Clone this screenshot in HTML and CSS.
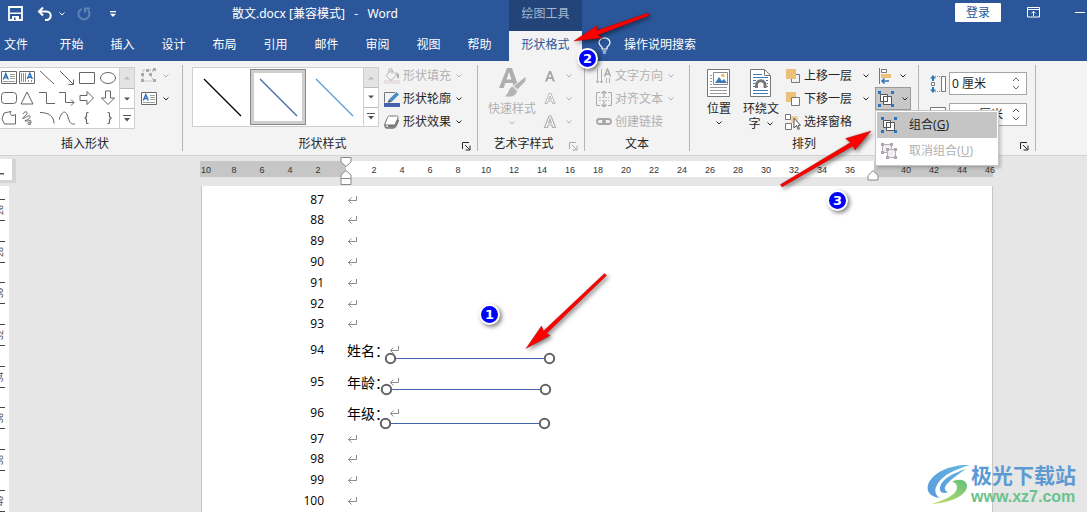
FILE: index.html
```html
<!DOCTYPE html>
<html lang="zh-CN">
<head>
<meta charset="utf-8">
<title>散文.docx - Word</title>
<link rel="stylesheet" href="styles.css">
</head>
<body>
<svg class="defs" aria-hidden="true">
  <symbol id="chev" viewBox="0 0 8 8"><path d="M1.500 2.500 4 5l2.500-2.500" fill="none" stroke="currentColor"/></symbol>
  <symbol id="ret" viewBox="0 0 10 10"><path d="M9.500 1v4.500H1.500M4.500 2.500l-3 3 3 3" fill="none" stroke="#8c8c8c"/></symbol>
  <symbol id="launch" viewBox="0 0 9 9"><path d="M.5 7V.5H7M3 3l4.500 4.500M8 3.500V8H3.500" fill="none" stroke="currentColor"/></symbol>
  <symbol id="textbox" viewBox="0 0 16 14"><path d="M.5.5h15v12H.5z" fill="#fff" stroke="#6a6a6a"/><path d="M9 3.500h5M9 5.500h5M9 7.500h5M2 10.500h12" stroke="#a0a0a0"/><path d="M2.300 8.500 4.800 2.500l2.500 6M3.200 6.500h3.200" fill="none" stroke="#2f6fb5" stroke-width="1.400"/></symbol>
  <symbol id="group" viewBox="0 0 16 16"><path d="M2.500 3.500h7v7h-7zM5.500 5.500h8v8h-8z" fill="#fff" stroke="#555"/><path d="M5.500 10.500v-5h4v5z" fill="#fff" stroke="#555"/><path d="M0 0h3v3H0zM13 0h3v3h-3zM0 13h3v3H0zM13 13h3v3h-3z" fill="#2e75b6"/></symbol>
  <symbol id="ungroup" viewBox="0 0 16 16"><path d="M1.500 1.500h9v8h-9z" fill="#f3eef3" stroke="#b5b0b5"/><path d="M6.500 6.500h8v8h-8z" fill="#f3eef3" stroke="#b5b0b5"/><path d="M0 0h3v3H0zM9 0h3v3H9zM0 8h3v3H0zM5 5h3v3H5zM13 5h3v3h-3zM5 13h3v3H5zM13 13h3v3h-3z" fill="#aaa6aa"/></symbol>
</svg>
<div class="app">
  <header class="header">
    <div class="titlebar">
      <div class="quick">
        <button class="ico" aria-label="保存"><svg width="15" height="15" viewBox="0 0 15 15"><path d="M1 1h13v13H1z" fill="none" stroke="#fff" stroke-width="1.800"/><path d="M2 6.500h11V8H2zM4 10h7v4H4z" fill="#fff"/><path d="M6 11.500h1.500V14H6z" fill="#2b579a"/></svg></button>
        <button class="ico undo" aria-label="撤消"><svg width="16" height="14" viewBox="0 0 16 14"><path d="M3 4.500h6.500a4.200 4.200 0 0 1 0 8.400H8" fill="none" stroke="#fff" stroke-width="2"/><path d="M6 .5 2 4.500l4 4" fill="none" stroke="#fff" stroke-width="2"/></svg></button>
        <button class="ico light" aria-label="撤消列表"><svg width="8" height="8"><use href="#chev"/></svg></button>
        <button class="ico redo" aria-label="重复" disabled><svg width="14" height="14" viewBox="0 0 14 14"><path d="M4.500 2A5.500 5.500 0 1 0 11 3.200M8 5.500V1.500h5" fill="none" stroke="#5f82b7" stroke-width="2"/></svg></button>
        <button class="ico custom" aria-label="自定义快速访问工具栏"><svg width="8" height="8" viewBox="0 0 8 8"><path d="M1 1h6v1.300H1zM1 3.800h6L4 7z" fill="#fff"/></svg></button>
      </div>
      <div class="doc-title">散文.docx [兼容模式] &nbsp;&nbsp;-&nbsp;&nbsp; Word</div>
      <div class="context-title">绘图工具</div>
      <div class="window-tools">
        <button class="login">登录</button>
        <button class="ico" aria-label="功能区显示选项"><svg width="13" height="11" viewBox="0 0 13 11"><path d="M.5.5h12v9.500H.5zM.5 2.500h12M6.500 9V4.500M4.500 6.300l2-2 2 2" fill="none" stroke="#fff"/></svg></button>
        <button class="ico min" aria-label="最小化"><svg width="10" height="2"><path d="M0 0h10v1H0z" fill="#fff"/></svg></button>
      </div>
    </div>
    <nav class="tabs">
      <button class="tab file">文件</button>
      <button class="tab">开始</button>
      <button class="tab">插入</button>
      <button class="tab">设计</button>
      <button class="tab">布局</button>
      <button class="tab">引用</button>
      <button class="tab">邮件</button>
      <button class="tab">审阅</button>
      <button class="tab">视图</button>
      <button class="tab">帮助</button>
      <button class="tab active">形状格式</button>
      <button class="tell"><svg width="13" height="17" viewBox="0 0 13 17"><path d="M4 12v-1.800C2.500 9 1 7.800 1 5.800a5.500 5 0 0 1 11 0c0 2-1.500 3.200-3 4.400V12zM4.500 14h4M5 16h3" fill="none" stroke="#fff" stroke-width="1.200"/></svg>操作说明搜索</button>
    </nav>
  </header>

  <section class="ribbon">
    <div class="group g-insert">
      <div class="body">
        <div class="gallery shapes">
          <div class="shape-grid">
            <button aria-label="文本框"><svg width="16" height="14"><use href="#textbox"/></svg></button>
            <button aria-label="竖排文本框"><svg width="16" height="14" viewBox="0 0 16 14"><path d="M.5.5h15v12H.5z" fill="#fff" stroke="#6a6a6a"/><path d="M2.500 2v9M4.500 2v9M6.500 2v9M9.500 9v2M12.500 9v2" stroke="#909090"/><path d="M8.300 8 10.800 2.300 13.300 8M9.200 6.300h3.200" fill="none" stroke="#2f6fb5" stroke-width="1.400"/></svg></button>
            <button aria-label="直线"><svg width="16" height="16"><path d="M1 1l14 13" stroke="#666"/></svg></button>
            <button aria-label="箭头"><svg width="16" height="16"><path d="M1 1l13 13M14.500 9.500v5h-5" fill="none" stroke="#666"/></svg></button>
            <button aria-label="矩形"><svg width="16" height="16"><path d="M.5 2.500h15v11H.5z" fill="none" stroke="#666"/></svg></button>
            <button aria-label="椭圆"><svg width="16" height="16"><ellipse cx="8" cy="8" rx="7.500" ry="5.500" fill="none" stroke="#666"/></svg></button>
            <button aria-label="圆角矩形"><svg width="16" height="16"><rect x=".5" y="2.500" width="15" height="11" rx="3" fill="none" stroke="#666"/></svg></button>
            <button aria-label="三角形"><svg width="16" height="16"><path d="M8 2l6 12H2z" fill="none" stroke="#666"/></svg></button>
            <button aria-label="肘形连接符"><svg width="16" height="16"><path d="M0 2.500h7.500v11H16" fill="none" stroke="#666"/></svg></button>
            <button aria-label="肘形箭头"><svg width="16" height="16"><path d="M0 2.500h6.500v10H15M12 9.500l3 3-3 3" fill="none" stroke="#666"/></svg></button>
            <button aria-label="右箭头"><svg width="16" height="16"><path d="M1 5.500h7V1.500l6.500 6.500L8 14.500v-4H1z" fill="none" stroke="#666"/></svg></button>
            <button aria-label="下箭头"><svg width="16" height="16"><path d="M5.500 1v7H1.500L8 14.500 14.500 8h-4V1z" fill="none" stroke="#666"/></svg></button>
            <button aria-label="任意多边形"><svg width="16" height="16"><path d="M3 3l7-1.500c-2 3.500 1 5 4.500 3V14H3.500L1 9z" fill="none" stroke="#666"/></svg></button>
            <button aria-label="自由曲线"><svg width="16" height="16"><path d="M4 4c2-4 6-2 3 1S2 9 5 8s6-4 6-1-8 4-4 4 5-2 5 1-4 3-3 1 3-1 2 2" fill="none" stroke="#666"/></svg></button>
            <button aria-label="弧形"><svg width="16" height="16"><path d="M1 2.500c9 0 14 4 14 11" fill="none" stroke="#666"/></svg></button>
            <button aria-label="曲线"><svg width="16" height="16"><path d="M0 10C3 0 7 0 9 7s3 7 7 7" fill="none" stroke="#666"/></svg></button>
            <button aria-label="左大括号"><svg width="16" height="16"><path d="M9.500 2.500h-1q-1 0-1 1v3L6 8l1.500 1.500v3q0 1 1 1h1" fill="none" stroke="#666" stroke-width="1.200"/></svg></button>
            <button aria-label="右大括号"><svg width="16" height="16"><path d="M7.500 2.500h1q1 0 1 1v3L11 8 9.500 9.500v3q0 1-1 1h-1" fill="none" stroke="#666" stroke-width="1.200"/></svg></button>
          </div>
          <div class="scroll">
            <button disabled aria-label="上一行"><svg width="6" height="4"><path d="M0 3.500h6L3 .5z" fill="#bbb"/></svg></button>
            <button aria-label="下一行"><svg width="6" height="4"><path d="M0 .5h6L3 3.500z" fill="#555"/></svg></button>
            <button aria-label="其他形状"><svg width="8" height="7"><path d="M0 0h8v1H0zM1 3h6L4 6.500z" fill="#555"/></svg></button>
          </div>
        </div>
        <div class="col pair">
          <button class="cmd" disabled aria-label="编辑形状"><svg width="16" height="15" viewBox="0 0 16 15"><path d="M2 2h11L9 7l4 6H2z" fill="none" stroke="#b9b9b9" stroke-dasharray="2 1"/><path d="M5 1h3v3H5zM12 0h3v3h-3zM0 5h3v3H0zM8 5h3v3H8zM0 11h3v3H0zM12 11h3v3h-3z" fill="#aaa"/></svg><svg width="8" height="8"><use href="#chev"/></svg></button>
          <button class="cmd" aria-label="绘制文本框"><svg width="16" height="14"><use href="#textbox"/></svg><svg width="8" height="8"><use href="#chev"/></svg></button>
        </div>
      </div>
      <div class="foot"><span>插入形状</span></div>
    </div>

    <div class="group g-style">
      <div class="body">
        <div class="gallery styles">
          <div class="style-list">
            <button aria-label="黑色细线"><svg width="40" height="40"><path d="M2 2l37 37" stroke="#000" stroke-width="1.300"/></svg></button>
            <button class="sel" aria-label="蓝色细线"><svg width="40" height="40"><path d="M2 2l37 37" stroke="#4463ac" stroke-width="1.300"/></svg></button>
            <button aria-label="浅蓝细线"><svg width="40" height="40"><path d="M2 2l37 37" stroke="#5b9bd5" stroke-width="1.300"/></svg></button>
          </div>
          <div class="scroll">
            <button disabled aria-label="上一行"><svg width="6" height="4"><path d="M0 3.500h6L3 .5z" fill="#bbb"/></svg></button>
            <button aria-label="下一行"><svg width="6" height="4"><path d="M0 .5h6L3 3.500z" fill="#555"/></svg></button>
            <button aria-label="其他样式"><svg width="8" height="7"><path d="M0 0h8v1H0zM1 3h6L4 6.500z" fill="#555"/></svg></button>
          </div>
        </div>
        <div class="col">
          <button class="cmd" disabled><svg width="16" height="16" viewBox="0 0 16 16"><path d="M0 12h16v4H0z" fill="#e8dfe4"/><path d="M2 7.500 7.500 2l5 5L7 12.500zM5 5V1.500C5 0 8 0 8 1.500V6" fill="#f3f3f3" stroke="#b0b0b0"/><path d="M12 4c3 1 4 4 2.500 7-1.500-1-2-3-1.500-4z" fill="#b0b0b0"/></svg><span>形状填充</span><svg width="8" height="8"><use href="#chev"/></svg></button>
          <button class="cmd"><svg width="16" height="16" viewBox="0 0 16 16"><path d="M0 12h16v4H0z" fill="#4661ad"/><path d="M11 1.500H.5v10" fill="none" stroke="#777"/><path d="M5 8.500 12.500 1l2.500 2.500L7.500 11z" fill="#4a8cc4"/><path d="M5 8.500 7.500 11 3.500 11.800z" fill="#555"/></svg><span>形状轮廓</span><svg width="8" height="8"><use href="#chev"/></svg></button>
          <button class="cmd"><svg width="16" height="16" viewBox="0 0 16 16"><path d="M4 13c6 2 9-1 10.500-9L13 2 4 11z" fill="#777"/><path d="M5.500 2h7c1.500 0 2 1 1.500 2l-2.500 5.500c-.5 1-1 1.500-2 1.500H2.500C1 11 .7 10 1.200 9L3.500 3.500C4 2.500 4.500 2 5.500 2z" fill="#fff" stroke="#777"/><path d="M1 10v2c.5 2 2 2 3 2h5c2 0 2.500-1 3-2l2.500-6" fill="none" stroke="#777" stroke-width="1.500"/></svg><span>形状效果</span><svg width="8" height="8"><use href="#chev"/></svg></button>
        </div>
      </div>
      <div class="foot"><span>形状样式</span><button class="launcher" aria-label="设置形状格式"><svg width="9" height="9"><use href="#launch"/></svg></button></div>
    </div>

    <div class="group g-art">
      <div class="body">
        <button class="big" disabled><svg width="32" height="34" viewBox="0 0 32 34"><path d="M3 23 11 3h5l7 20h-4.700l-1.600-5H9.300l-1.600 5zM10.500 14.500h5L13 7z" fill="#aeaeae"/><path d="M30 11v5l-8.500 9-4-4z" fill="#b3b3b3" stroke="#f3f3f3"/><path d="M16.500 21l5 5c-1 6-7 7-14 5.500 5-1.500 4-8 9-10.500z" fill="#b3b3b3" stroke="#f3f3f3"/></svg><span>快速样式</span><svg width="8" height="8"><use href="#chev"/></svg></button>
        <div class="col letters">
          <button class="cmd" disabled aria-label="文本填充"><svg width="14" height="14" viewBox="0 0 14 14"><path d="M2 12.500 6 2h2l4 10.500H9.800L9 10H5l-.8 2.500zM5.600 8.200h2.800L7 4.500z" fill="#a6a6a6"/></svg><svg width="8" height="8"><use href="#chev"/></svg></button>
          <button class="cmd" disabled aria-label="文本轮廓"><svg width="14" height="14" viewBox="0 0 14 14"><path d="M2 11.500 6 1.500h2l4 10H9.800L9 9H5l-.8 2.500zM5.600 7.200h2.800L7 4z" fill="#fff" stroke="#a6a6a6" stroke-width=".8"/></svg><svg width="8" height="8"><use href="#chev"/></svg></button>
          <button class="cmd" disabled aria-label="文本效果"><svg width="14" height="14" viewBox="0 0 14 14"><path d="M1.500 12.500 6 1h2l4.500 11.500H9.500L9 10H5l-.5 2.500zM5.600 8h2.800L7 4z" fill="#fff" stroke="#b0b0b0" stroke-width="1.200"/></svg><svg width="8" height="8"><use href="#chev"/></svg></button>
        </div>
      </div>
      <div class="foot"><span>艺术字样式</span><button class="launcher dim" aria-label="设置文本效果格式"><svg width="9" height="9"><use href="#launch"/></svg></button></div>
    </div>

    <div class="group g-text">
      <div class="body">
        <div class="col">
          <button class="cmd" disabled><svg width="16" height="16" viewBox="0 0 16 16"><path d="M1.500 1v14M5.500 1v14M10.500 10v5M13.500 10v5M0 13l1.500 2L3 13M4 13l1.500 2L7 13" fill="none" stroke="#b0b0b0"/><path d="M8.500 8.500 11.500 1l3 7.500M9.500 6h4" fill="none" stroke="#aaa" stroke-width="1.400"/></svg><span>文字方向</span><svg width="8" height="8"><use href="#chev"/></svg></button>
          <button class="cmd" disabled><svg width="16" height="16" viewBox="0 0 16 16"><path d="M4 1.500H.5v13H4M12 1.500h3.500v13H12" fill="none" stroke="#b0a8b0"/><path d="M3 6.500h10M3 9.500h10" stroke="#bbb" stroke-dasharray="2 1"/><path d="M8 0v6M8 10v6M5.500 2.500 8 0l2.500 2.500M5.500 13.500 8 16l2.500-2.500" fill="none" stroke="#aaa" stroke-width="1.300"/></svg><span>对齐文本</span><svg width="8" height="8"><use href="#chev"/></svg></button>
          <button class="cmd" disabled><svg width="16" height="16" viewBox="0 0 16 16"><rect x="1" y="5" width="8" height="5" rx="2.500" fill="none" stroke="#a6a6a6" stroke-width="1.800"/><rect x="7" y="5" width="8" height="5" rx="2.500" fill="none" stroke="#a6a6a6" stroke-width="1.800"/></svg><span>创建链接</span></button>
        </div>
      </div>
      <div class="foot"><span>文本</span></div>
    </div>

    <div class="group g-arrange">
      <div class="body">
        <button class="big"><svg width="24" height="34" viewBox="0 0 24 34"><path d="M.5 4.500h22v27H.5z" fill="#fff" stroke="#777"/><path d="M6.500 7.500h14v12h-14z" fill="#fff" stroke="#888"/><path d="M8 18l4-6 3 4 2-2 3 4z" fill="#3d7ab8"/><circle cx="16" cy="10.500" r="1.700" fill="#f0b95c"/><path d="M3 10.500h2M3 13.500h2M3 16.500h2M3 19.500h2M3 22.500h17M3 25.500h17M3 28.500h17" stroke="#999"/></svg><span>位置</span><svg width="8" height="8"><use href="#chev"/></svg></button>
        <button class="big wrap"><svg width="22" height="34" viewBox="0 0 22 34"><path d="M.5 4.500h14l6 6v21H.5z" fill="#fff" stroke="#777"/><path d="M14.500 4.500v6h6" fill="none" stroke="#777"/><path d="M3 9.500h9M3 12.500h15M3 15.500h3M3 18.500h2M3 21.500h2M16 15.500h2M17 18.500h1M17 21.500h1M3 25.500h15M3 28.500h15" stroke="#3d7ab8"/><path d="M6.500 23v-3a4.300 4.300 0 0 1 8.600 0v3" fill="none" stroke="#777" stroke-width="3"/></svg><span>环绕文<br>字 <svg width="8" height="8"><use href="#chev"/></svg></span></button>
        <div class="col order">
          <button class="cmd"><svg width="16" height="16" viewBox="0 0 16 16"><path d="M11 6.500h3.500v8h-8V11" fill="none" stroke="#777"/><path d="M1 1h10v10H1z" fill="#ecc078"/></svg><span>上移一层</span><svg width="8" height="8"><use href="#chev"/></svg></button>
          <button class="cmd"><svg width="16" height="16" viewBox="0 0 16 16"><path d="M1 1h10v10H1z" fill="#ecc078"/><path d="M6.500 6.500h8v8h-8z" fill="#fff" stroke="#777"/></svg><span>下移一层</span><svg width="8" height="8"><use href="#chev"/></svg></button>
          <button class="cmd"><svg width="16" height="16" viewBox="0 0 16 16"><path d="M6 2h7v7H6z" fill="#f2cf96"/><path d="M.5.500h5v5h-5zM.5 9.500h6v6h-6z" fill="#fff" stroke="#777"/><path d="M9 4v10l2.500-2.500L13 15.500l1.500-.7-1.500-3.500h2.500z" fill="#fff" stroke="#555"/></svg><span>选择窗格</span></button>
        </div>
        <div class="col align">
          <button class="tool" aria-label="对齐"><svg width="14" height="16" viewBox="0 0 14 16"><path d="M1.500 0v16" stroke="#777"/><path d="M3.500 1.500h5v3h-5z" fill="#fff" stroke="#777"/><path d="M3 6h10v4H3z" fill="#ecc078"/><path d="M11 13H4M6.500 10.500 4 13l2.500 2.500" fill="none" stroke="#2e75b6" stroke-width="1.500"/></svg><svg width="8" height="8"><use href="#chev"/></svg></button>
          <div class="drop">
            <button class="tool pressed" aria-label="组合" aria-expanded="true"><svg width="16" height="16"><use href="#group"/></svg><svg width="8" height="8"><use href="#chev"/></svg></button>
            <div class="menu" role="menu">
              <button class="item hot" role="menuitem"><svg width="16" height="16"><use href="#group"/></svg><span>组合(<u>G</u>)</span></button>
              <button class="item" role="menuitem" disabled><svg width="16" height="16"><use href="#ungroup"/></svg><span>取消组合(<u>U</u>)</span></button>
            </div>
          </div>
        </div>
      </div>
      <div class="foot"><span>排列</span></div>
    </div>

    <div class="group g-size">
      <div class="body">
        <div class="field">
          <label for="h" aria-label="高度"><svg width="16" height="18" viewBox="0 0 16 18"><path d="M11.500 1.500h4v15h-4z" fill="#fff" stroke="#777"/><path d="M5 1.500h6M5 16.500h6" stroke="#888" stroke-dasharray="1 1"/><path d="M1.500 7.500h3v3h-3z" fill="#fff" stroke="#777"/><path d="M3 0l3 3.500H4V6H2V3.500H0zM3 18l3-3.500H4V12H2v2.500H0z" fill="#2e75b6"/></svg></label>
          <div class="spin"><input id="h" type="text" value="0 厘米"><div class="steps"><button aria-label="增加高度"><svg width="8" height="5"><path d="M1 4l3-3 3 3" fill="none" stroke="#666"/></svg></button><button aria-label="减少高度"><svg width="8" height="5"><path d="M1 1l3 3 3-3" fill="none" stroke="#666"/></svg></button></div></div>
        </div>
        <div class="field">
          <label for="w" aria-label="宽度"><svg width="16" height="18" viewBox="0 0 16 18"><path d="M.5 1.500h15v4H.5z" fill="#fff" stroke="#777"/><path d="M0 13l4-3v6zM16 13l-4-3v6z" fill="#2e75b6"/></svg></label>
          <div class="spin"><input id="w" type="text" value="4.23 厘米"><div class="steps"><button aria-label="增加宽度"><svg width="8" height="5"><path d="M1 4l3-3 3 3" fill="none" stroke="#666"/></svg></button><button aria-label="减少宽度"><svg width="8" height="5"><path d="M1 1l3 3 3-3" fill="none" stroke="#666"/></svg></button></div></div>
        </div>
      </div>
      <div class="foot"><button class="launcher" aria-label="布局选项"><svg width="9" height="9"><use href="#launch"/></svg></button></div>
    </div>
  </section>

  <main class="work">
    <div class="ruler-row">
      <button class="tabstop" aria-label="制表符"><svg width="12" height="21"><path d="M0 14h4v1.500H0z" fill="#555"/></svg></button>
      <div class="hruler">
        <div class="zone before"><i>10</i><i>8</i><i>6</i><i>4</i><i>2</i></div>
        <div class="zone text"><i>2</i><i>4</i><i>6</i><i>8</i><i>10</i><i>12</i><i>14</i><i>16</i><i>18</i><i>20</i><i>22</i><i>24</i><i>26</i><i>28</i><i>30</i><i>32</i><i>34</i><i>36</i></div>
        <div class="zone after"><i>40</i><i>42</i><i>44</i><i>46</i></div>
        <svg class="indent left" width="12" height="29" viewBox="0 0 12 29"><path d="M1 .5h10V5L6 9.500 1 5zM6 13.500 11 18v9.500H1V18zM1 21.500h10" fill="#fff" stroke="#888"/></svg>
        <svg class="indent right" width="12" height="11" viewBox="0 0 12 11"><path d="M6 .7 11 5.500v4.500H1V5.500z" fill="#fff" stroke="#888"/></svg>
      </div>
    </div>
    <div class="canvas">
      <div class="vruler"><i>26</i><i>28</i><i>30</i><i>32</i><i>34</i><i>36</i><i>38</i><i>40</i></div>
      <article class="sheet">
        <div class="line"><b>87</b><p><svg><use href="#ret"/></svg></p></div>
        <div class="line"><b>88</b><p><svg><use href="#ret"/></svg></p></div>
        <div class="line"><b>89</b><p><svg><use href="#ret"/></svg></p></div>
        <div class="line"><b>90</b><p><svg><use href="#ret"/></svg></p></div>
        <div class="line"><b>91</b><p><svg><use href="#ret"/></svg></p></div>
        <div class="line"><b>92</b><p><svg><use href="#ret"/></svg></p></div>
        <div class="line"><b>93</b><p><svg><use href="#ret"/></svg></p></div>
        <div class="line tall first"><b>94</b><p>姓名：<svg><use href="#ret"/></svg></p></div>
        <div class="line tall"><b>95</b><p>年龄：<svg><use href="#ret"/></svg></p></div>
        <div class="line tall"><b>96</b><p>年级：<svg><use href="#ret"/></svg></p></div>
        <div class="line"><b>97</b><p><svg><use href="#ret"/></svg></p></div>
        <div class="line"><b>98</b><p><svg><use href="#ret"/></svg></p></div>
        <div class="line"><b>99</b><p><svg><use href="#ret"/></svg></p></div>
        <div class="line"><b>100</b><p><svg><use href="#ret"/></svg></p></div>
        <svg class="drawn" width="400" height="100" viewBox="0 0 400 100">
          <g stroke="#4463ac"><path d="M18 18.500h160M14 49.500h160M13 83.500h160"/></g>
          <g fill="#fff" stroke="#636363" stroke-width="2"><circle cx="18.500" cy="18.500" r="4.700"/><circle cx="177.500" cy="18.500" r="4.700"/><circle cx="14.500" cy="49.500" r="4.700"/><circle cx="173.500" cy="49.500" r="4.700"/><circle cx="13.500" cy="83.500" r="4.700"/><circle cx="172.500" cy="83.500" r="4.700"/></g>
        </svg>
      </article>
    </div>
  </main>

  <svg class="notes" width="1087" height="512" viewBox="0 0 1087 512">
    <g class="arrows" fill="#f00" stroke="#a00000" stroke-width=".4">
      <path d="M574 41 597 25.500 596.500 30.500 648 13 649 15.500 598 35 602 38z"/>
      <path d="M526 348.500 541.500 326 543.500 331 604.500 273.500 606.500 275.500 546.500 333.500 550 335.500z"/>
      <path d="M871 131 855 150 853 146 782 187 780.500 184.500 850.500 142.500 845.500 138.500z"/>
    </g>
    <g class="badges">
      <circle cx="587.500" cy="58.500" r="9.500"/><text x="587.500" y="63">2</text>
      <circle cx="489.500" cy="314.500" r="9.500"/><text x="489.500" y="319">1</text>
      <circle cx="837.500" cy="200.500" r="9.500"/><text x="837.500" y="205">3</text>
    </g>
  </svg>

  <a class="mark" href="#top">
    <svg width="44" height="42" viewBox="0 0 44 42">
      <defs><linearGradient id="lg1" x1="0" y1="1" x2="1" y2="0"><stop offset="0" stop-color="#5b9bd8"/><stop offset="1" stop-color="#62b5e4"/></linearGradient><linearGradient id="lg2" x1="0" y1="1" x2="1" y2="0"><stop offset="0" stop-color="#c8dc6a"/><stop offset="1" stop-color="#62c17c"/></linearGradient></defs>
      <path d="M43 1C25 0 5 8 1 21c-2 8 4 12 12 13-5-3-6-8-3-13C15 11 29 5 43 1z" fill="url(#lg1)"/>
      <path d="M39 5C26 9 15 15 13 23c-1 6 4 7 8 5-4-1-4-5-1-8 5-6 12-10 19-15z" fill="url(#lg1)"/>
      <path d="M25 18c5-4 15-3 15 4 0 9-16 17-36 18 14-4 25-9 26-16 0-4-2-6-5-6z" fill="url(#lg2)"/>
    </svg>
    <span><strong>极光下载站</strong><em>www.xz7.com</em></span>
  </a>
</div>
</body>
</html>
```

FILE: styles.css
```css
* { box-sizing: border-box; }
body {
  margin: 0;
  font: 12px/16px "Noto Sans", "Noto Sans CJK SC", sans-serif;
  color: #262626;
}
button {
  margin: 0;
  padding: 0;
  border: 0;
  background: none;
  font: inherit;
  color: inherit;
}
svg { display: block; flex: none; }
i, em { font-style: normal; }
p { margin: 0; }
.defs { position: absolute; width: 0; height: 0; }
.app {
  position: relative;
  display: flex;
  flex-direction: column;
  height: 100vh;
  overflow: hidden;
  background: #e6e6e6;
}

/* title bar and tabs */
.header { flex: none; background: #2b579a; color: #fff; }
.titlebar { display: flex; height: 31px; }
.quick { display: flex; align-items: center; width: 232px; padding: 0 0 4px 8px; }
.ico { display: flex; align-items: center; }
.undo { margin-left: 14px; }
.light { margin-left: 5px; }
.redo { margin-left: 11px; }
.custom { margin-left: 18px; }
.doc-title { width: 277px; padding-top: 6px; white-space: nowrap; }
.context-title {
  width: 73px;
  padding-top: 6px;
  background: #224478;
  color: #a6b6d0;
  text-align: center;
}
.window-tools {
  display: flex;
  align-items: center;
  flex: 1;
  justify-content: flex-end;
  gap: 26px;
  padding: 0 2px 6px 0;
}
.login { width: 46px; height: 19px; border-radius: 1px; background: #fff; color: #2b579a; }
.window-tools .min { margin-left: 9px; }
.tabs { display: flex; height: 30px; }
.tab { width: 51px; padding-bottom: 2px; }
.tab.file { width: 46px; padding-left: 4px; text-align: left; }
.tab.active { width: 73px; margin-left: 4px; background: #f3f3f3; color: #2b579a; }
.tell { display: flex; align-items: center; gap: 13px; margin-left: 16px; padding-bottom: 2px; }

/* ribbon */
.ribbon {
  display: flex;
  flex: none;
  height: 95px;
  padding: 4px 0;
  border-bottom: 1px solid #d2d2d2;
  background: #f3f3f3;
}
.group { display: flex; flex-direction: column; flex: none; border-right: 1px solid #b5b5b5; }
.body { display: flex; align-items: flex-start; flex: 1; }
.foot { display: flex; height: 14px; line-height: 14px; }
.foot span { flex: 1; text-align: center; }
.launcher { display: flex; align-items: flex-end; margin-left: auto; width: 12px; margin-right: 3px; }
.launcher.dim { color: #aaa; }
.g-insert { padding-right: 12px; }
.g-style .body { padding: 0 14px 0 9px; gap: 5px; }
.g-art .body { padding: 0 11px 0 10px; gap: 7px; }
.g-text .body { padding: 0 14px 0 11px; }
.g-arrange .body { padding: 0 7px 0 17px; }
.g-size .body { flex-direction: column; gap: 8px; padding: 7px 8px 0 11px; }

.col { display: flex; flex-direction: column; gap: 2px; }
.cmd { display: flex; align-items: center; height: 21px; }
.cmd span { margin: 0 4px 0 3px; }
.cmd:disabled, .big:disabled, .item:disabled { color: #b1b1b1; }
.pair { margin-left: 6px; }
.pair .cmd { gap: 5px; }
.letters .cmd { gap: 8px; }
.order { margin: 0 5px 0 6px; }
.order .cmd span { margin-right: 10px; }
.align { gap: 0; }

.gallery { display: flex; margin-top: 2px; border: 1px solid #cfcfcf; background: #fff; }
.gallery button { display: flex; align-items: center; justify-content: center; }
.shapes { border-left: 0; }
.shape-grid { display: grid; grid-template-columns: 17px repeat(4, 20px) 22px; grid-auto-rows: 20px; }
.styles { height: 60px; }
.style-list { display: grid; grid-template-columns: repeat(3, 56px); padding: 1px; }
.style-list .sel { border: 1px solid #8a8886; box-shadow: inset 0 0 0 3px #d0cecc; }
.scroll { display: grid; grid-template-rows: 1fr 1fr 1fr; width: 15px; border-left: 1px solid #cfcfcf; }
.scroll button + button { border-top: 1px solid #bdbdbd; }
.scroll button:disabled { background: #e3e3e3; }

.big { display: flex; flex-direction: column; align-items: center; line-height: 16px; }
.big span { margin-top: 2px; margin-bottom: 2px; }
.big.wrap { margin-left: 12px; line-height: 15px; }
.wrap span svg { display: inline-block; margin-left: 2px; }

.tool { display: flex; align-items: center; gap: 7px; width: 36px; height: 22px; padding: 0 4px 0 2px; border: 1px solid transparent; }
.tool svg:last-child { margin-left: auto; }
.tool.pressed { height: 23px; border-color: #9a9a9a; background: #c8c8c8; }
.drop { position: relative; }
.menu {
  position: absolute;
  top: 100%;
  left: 0;
  z-index: 3;
  width: 124px;
  padding: 1px;
  border: 1px solid #c6c6c6;
  background: #fff;
  box-shadow: 2px 2px 3px rgba(0, 0, 0, .2);
}
.item { display: flex; align-items: center; gap: 12px; width: 100%; height: 26px; padding-left: 4px; }
.item.hot { background: #c5c5c5; }

.field { display: flex; align-items: center; gap: 3px; }
.spin { display: flex; width: 78px; height: 23px; border: 1px solid #a6a6a6; background: #fff; }
.spin input { flex: 1; min-width: 0; padding: 0 0 0 2px; border: 0; outline: 0; background: none; font: inherit; color: inherit; }
.steps { display: flex; flex-direction: column; justify-content: space-evenly; width: 14px; }

/* rulers */
.work { display: flex; flex-direction: column; flex: 1; min-height: 0; }
.ruler-row { display: flex; align-items: flex-start; flex: none; height: 30px; padding-top: 3px; }
.tabstop { width: 16px; height: 24px; border: solid #d4d4d4; border-width: 0 4px 3px 0; background: #fff; }
.hruler { position: relative; display: flex; margin: 2px 0 0 184px; font: 9px/18px "Liberation Sans", Arial, sans-serif; color: #333; }
.zone { display: flex; height: 16px; }
.zone i { flex: none; width: 28px; text-align: center; }
.before { justify-content: flex-end; width: 146px; padding-right: 14px; background: #c6c6c6; }
.text { padding: 0 10px 0 14px; background: #fff; }
.after { width: 119px; padding-left: 18px; background: #c6c6c6; }
.indent { position: absolute; top: -4px; left: 140px; }
.indent.right { top: 9px; left: 667px; }
.canvas { display: flex; flex: 1; min-height: 0; }
.vruler {
  display: grid;
  align-content: start;
  grid-auto-rows: 42px 41px 42px 42px 41px;
  width: 9px;
  padding-top: 13px;
  overflow: hidden;
  background: #fff;
  font: 9px/9px "Liberation Sans", Arial, sans-serif;
  color: #444;
}
.vruler i {
  display: flex;
  justify-content: center;
  align-items: flex-end;
  width: 5px;
  height: 22px;
  border-top: 1px solid #444;
  border-bottom: 1px solid #444;
  writing-mode: sideways-lr;
}

/* document */
.sheet {
  position: relative;
  width: 792px;
  margin-left: 192px;
  padding-top: 3px;
  border: solid #c6c6c6;
  border-width: 0 1px;
  background: #fff;
  color: #000;
}
.line { display: flex; align-items: center; height: 21px; }
.line:nth-child(5n+2) { height: 20px; }
.line.tall { height: 31px; }
.line.first { height: 32px; }
.line b { width: 122px; font: 12px/16px "Open Sans", sans-serif; text-align: right; }
.line p { display: flex; align-items: center; margin-left: 23px; font: 14px/20px "Noto Sans CJK SC", sans-serif; }
.line svg:not(.drawn) { width: 10px; height: 10px; }
.drawn { position: absolute; top: 154px; left: 170px; }

/* annotations */
.notes { position: absolute; top: 0; left: 0; z-index: 5; pointer-events: none; }
.arrows, .badges circle { filter: drop-shadow(2px 2px 2px rgba(0, 0, 0, .5)); }
.badges circle { fill: #00f; stroke: #fff; stroke-width: 2px; }
.badges text { fill: #fff; font: bold 13px "DejaVu Sans", sans-serif; text-anchor: middle; }
.mark { position: absolute; right: 11px; bottom: 4px; display: flex; align-items: center; text-decoration: none; }
.mark span { display: flex; flex-direction: column; }
.mark strong { font: bold 21px/24px "Noto Sans CJK SC", sans-serif; color: #5e9ad2; }
.mark em { font: bold 16px/22px "Liberation Sans", Arial, sans-serif; color: #6bc28a; }
```
